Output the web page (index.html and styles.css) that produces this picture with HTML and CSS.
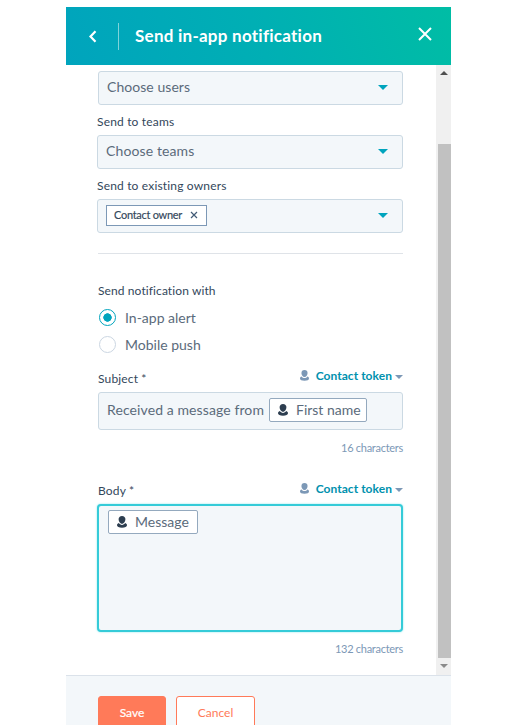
FILE: index.html
```html
<!DOCTYPE html>
<html lang="en">
<head>
<meta charset="utf-8">
<title>Send in-app notification</title>
<link rel="stylesheet" href="styles.css">
</head>
<body>
<svg class="defs" width="0" height="0">
  <symbol id="person" viewBox="0 0 10 12">
    <path d="M5 0C2.800 0 1.600 1.300 1.600 3.300c0 2 1.400 4.500 3.400 4.500s3.400-2.500 3.400-4.500C8.400 1.300 7.200 0 5 0z"/>
    <path d="M1.800 7.100C.6 7.600 0 8.300 0 9.300 0 10.900 2 11.800 5 11.800s5-.9 5-2.500c0-1-.6-1.700-1.800-2.200C7.400 8.300 6.300 8.900 5 8.900S2.600 8.300 1.800 7.100z"/>
  </symbol>
</svg>
<div class="panel">
  <header class="header">
    <svg class="back" width="9" height="13" viewBox="0 0 9 13"><path d="M7.500 1.200 2.500 6.500l5 5.300"/></svg>
    <span class="divider"></span>
    <h1 class="title">Send in-app notification</h1>
    <svg class="close" width="14" height="14" viewBox="0 0 14 14"><path d="M1 1l12 12M13 1 1 13"/></svg>
  </header>
  <div class="middle">
    <main class="form">
      <div class="select"><span class="placeholder">Choose users</span><i class="caret"></i></div>
      <div class="label">Send to teams</div>
      <div class="select wide"><span class="placeholder teams">Choose teams</span><i class="caret"></i></div>
      <div class="label">Send to existing owners</div>
      <div class="select wide">
        <span class="tag"><span>Contact owner</span><svg width="8" height="8" viewBox="0 0 8 8"><path d="M1 1l6 6M7 1 1 7"/></svg></span>
        <i class="caret"></i>
      </div>
      <hr class="rule">
      <div class="group-label">Send notification with</div>
      <div class="radio"><span class="dot on"></span><span>In-app alert</span></div>
      <div class="radio"><span class="dot"></span><span>Mobile push</span></div>
      <div class="field-head first">
        <span class="name">Subject *</span>
        <span class="token-link"><svg width="9" height="11"><use href="#person"/></svg><b>Contact token</b><i class="mini"></i></span>
      </div>
      <div class="input"><span class="msg">Received a message from</span><span class="token"><svg width="10" height="12"><use href="#person"/></svg><span>First name</span></span></div>
      <div class="count">16 characters</div>
      <div class="field-head">
        <span class="name">Body *</span>
        <span class="token-link low"><svg width="9" height="11"><use href="#person"/></svg><b>Contact token</b><i class="mini"></i></span>
      </div>
      <div class="textarea"><span class="token body-token"><svg width="10" height="12"><use href="#person"/></svg><span>Message</span></span></div>
      <div class="count last">132 characters</div>
    </main>
    <div class="scrollbar"><i class="up"></i><span class="thumb"></span><i class="down"></i></div>
  </div>
  <footer class="footer"><span class="btn save">Save</span><span class="btn cancel">Cancel</span></footer>
</div>
</body>
</html>
```
FILE: styles.css
```css
* { box-sizing: border-box; }
html { background: #fff; }
body { margin: 0; height: 725px; overflow: hidden; font-family: Lato, "Liberation Sans", sans-serif; font-variant-ligatures: none; color: #33475b; }
.defs { display: block; position: absolute; }
.panel { width: 385px; height: 718px; margin: 7px 0 0 66px; display: flex; flex-direction: column; overflow: hidden; }

.header { flex: none; height: 58px; display: flex; align-items: center; padding: 0 19px 0 22px; background: linear-gradient(70deg, #00a4bd 0%, #00afb4 50%, #00bda5 100%); color: #fff; }
.back, .close { fill: none; stroke: #fff; }
.back { stroke-width: 2.200; margin-top: 1px; }
.close { stroke-width: 2; margin-left: auto; margin-top: -4px; }
.divider { width: 1px; height: 27px; margin: 0 16px 0 21px; background: #7fd3da; }
.title { margin: 0; font-size: 17px; line-height: 24px; font-weight: 700; letter-spacing: .25px; white-space: nowrap; }

.middle { flex: none; height: 610px; display: flex; }
.form { width: 370px; padding: 6px 33px 0 32px; display: flex; flex-direction: column; white-space: nowrap; }
.form > * { flex: none; }

.select { height: 34px; display: flex; align-items: center; justify-content: space-between; padding: 0 14px 2px 8px; background: #f3f7fa; border: 1px solid #cbd9e3; border-radius: 3px; }
.wide { margin-left: -1px; }
.placeholder { font-size: 14px; line-height: 18px; color: #5b6b7b; letter-spacing: .05px; }
.teams { letter-spacing: .12px; }
.caret { border: 5.500px solid transparent; border-top-color: #00a4bd; border-bottom: 0; }
.label { height: 30px; padding-top: 2px; line-height: 29px; font-size: 12px; margin-left: -1px; letter-spacing: .17px; }
.tag { display: flex; align-items: center; justify-content: space-between; height: 21px; width: 101px; padding: 0 8px 1px 7px; background: #fff; border: 1px solid #7c98b6; font-size: 11px; letter-spacing: -.28px; -webkit-text-stroke: .15px; }
.tag svg { fill: none; stroke: #425b76; stroke-width: 1.200; margin-top: 1px; }
.rule { width: 100%; height: 1px; margin: 20px 0 24px; border: 0; background: #dfe3e8; }
.group-label { height: 26px; line-height: 26px; font-size: 12px; letter-spacing: .1px; }

.radio { height: 27px; display: flex; align-items: center; gap: 9px; padding-left: 1px; font-size: 14px; color: #5b6b7b; }
.dot { width: 17px; height: 17px; border: 1px solid #cbd6e2; border-radius: 50%; background: #fff; }
.dot.on { border-color: #00a4bd; background: radial-gradient(circle, #00a4bd 0 3.900px, #fff 4.500px); }

.field-head { height: 28px; display: flex; align-items: center; justify-content: space-between; font-size: 12px; margin-top: 10px; }
.field-head.first { margin-top: 6px; }
.name { letter-spacing: .15px; }
.token-link { display: flex; align-items: center; color: #0091ae; margin-top: -5px; }
.low { margin-top: -3px; }
.token-link svg { fill: #7c98b6; margin-right: 7px; }
.token-link b { letter-spacing: .05px; }
.mini { margin: 2px 0 0 3px; border: 4px solid transparent; border-top-color: #7c98b6; border-bottom: 0; }
.input { height: 38px; display: flex; align-items: center; padding: 0 8px 2px; background: #f3f7fa; border: 1px solid #cbd9e3; border-radius: 3px; }
.msg { width: 162px; margin-top: -1px; font-size: 14px; color: #5b6b7b; letter-spacing: .1px; }
.token { display: flex; align-items: center; width: 98px; height: 24px; padding: 0 0 1px 8px; background: #fff; border: 1px solid #94a9be; border-radius: 2px; font-size: 14px; color: #5b6b7b; }
.token svg { fill: #2d3e50; margin-right: 8px; }
.token > span { margin-top: -1px; }
.body-token { width: 90px; }
.count { height: 36px; line-height: 36px; text-align: right; font-size: 11px; letter-spacing: -.28px; color: #7c98b6; }
.textarea { height: 128px; margin: 0 0 0 -1px; padding: 4px 9px; background: #f3f7fa; border: 2px solid #35cbd8; border-radius: 4px; box-shadow: 0 0 2px #7fe5ec; }
.last { height: 34px; line-height: 34px; }

.scrollbar { width: 15px; display: flex; flex-direction: column; align-items: center; background: #f0f0f0; }
.up { margin-top: 6px; border: 4px solid transparent; border-bottom-color: #505050; border-top: 0; }
.thumb { width: 13px; height: 514px; margin: 69px 0 6px 1px; background: #c1c1c1; }
.down { border: 4px solid transparent; border-top-color: #8a8a8a; border-bottom: 0; }

.footer { flex: 1; display: flex; gap: 10px; padding: 20px 32px 0; background: #f3f7fa; border-top: 1px solid #dbe2ea; }
.btn { flex: none; height: 36px; line-height: 32px; text-align: center; border-radius: 3px; font-size: 12px; border: 1px solid #ff7a59; }
.save { width: 68px; background: #ff7a59; color: #fff; -webkit-text-stroke: .2px; }
.cancel { width: 79px; background: #fff; color: #ff7a59; }
```
